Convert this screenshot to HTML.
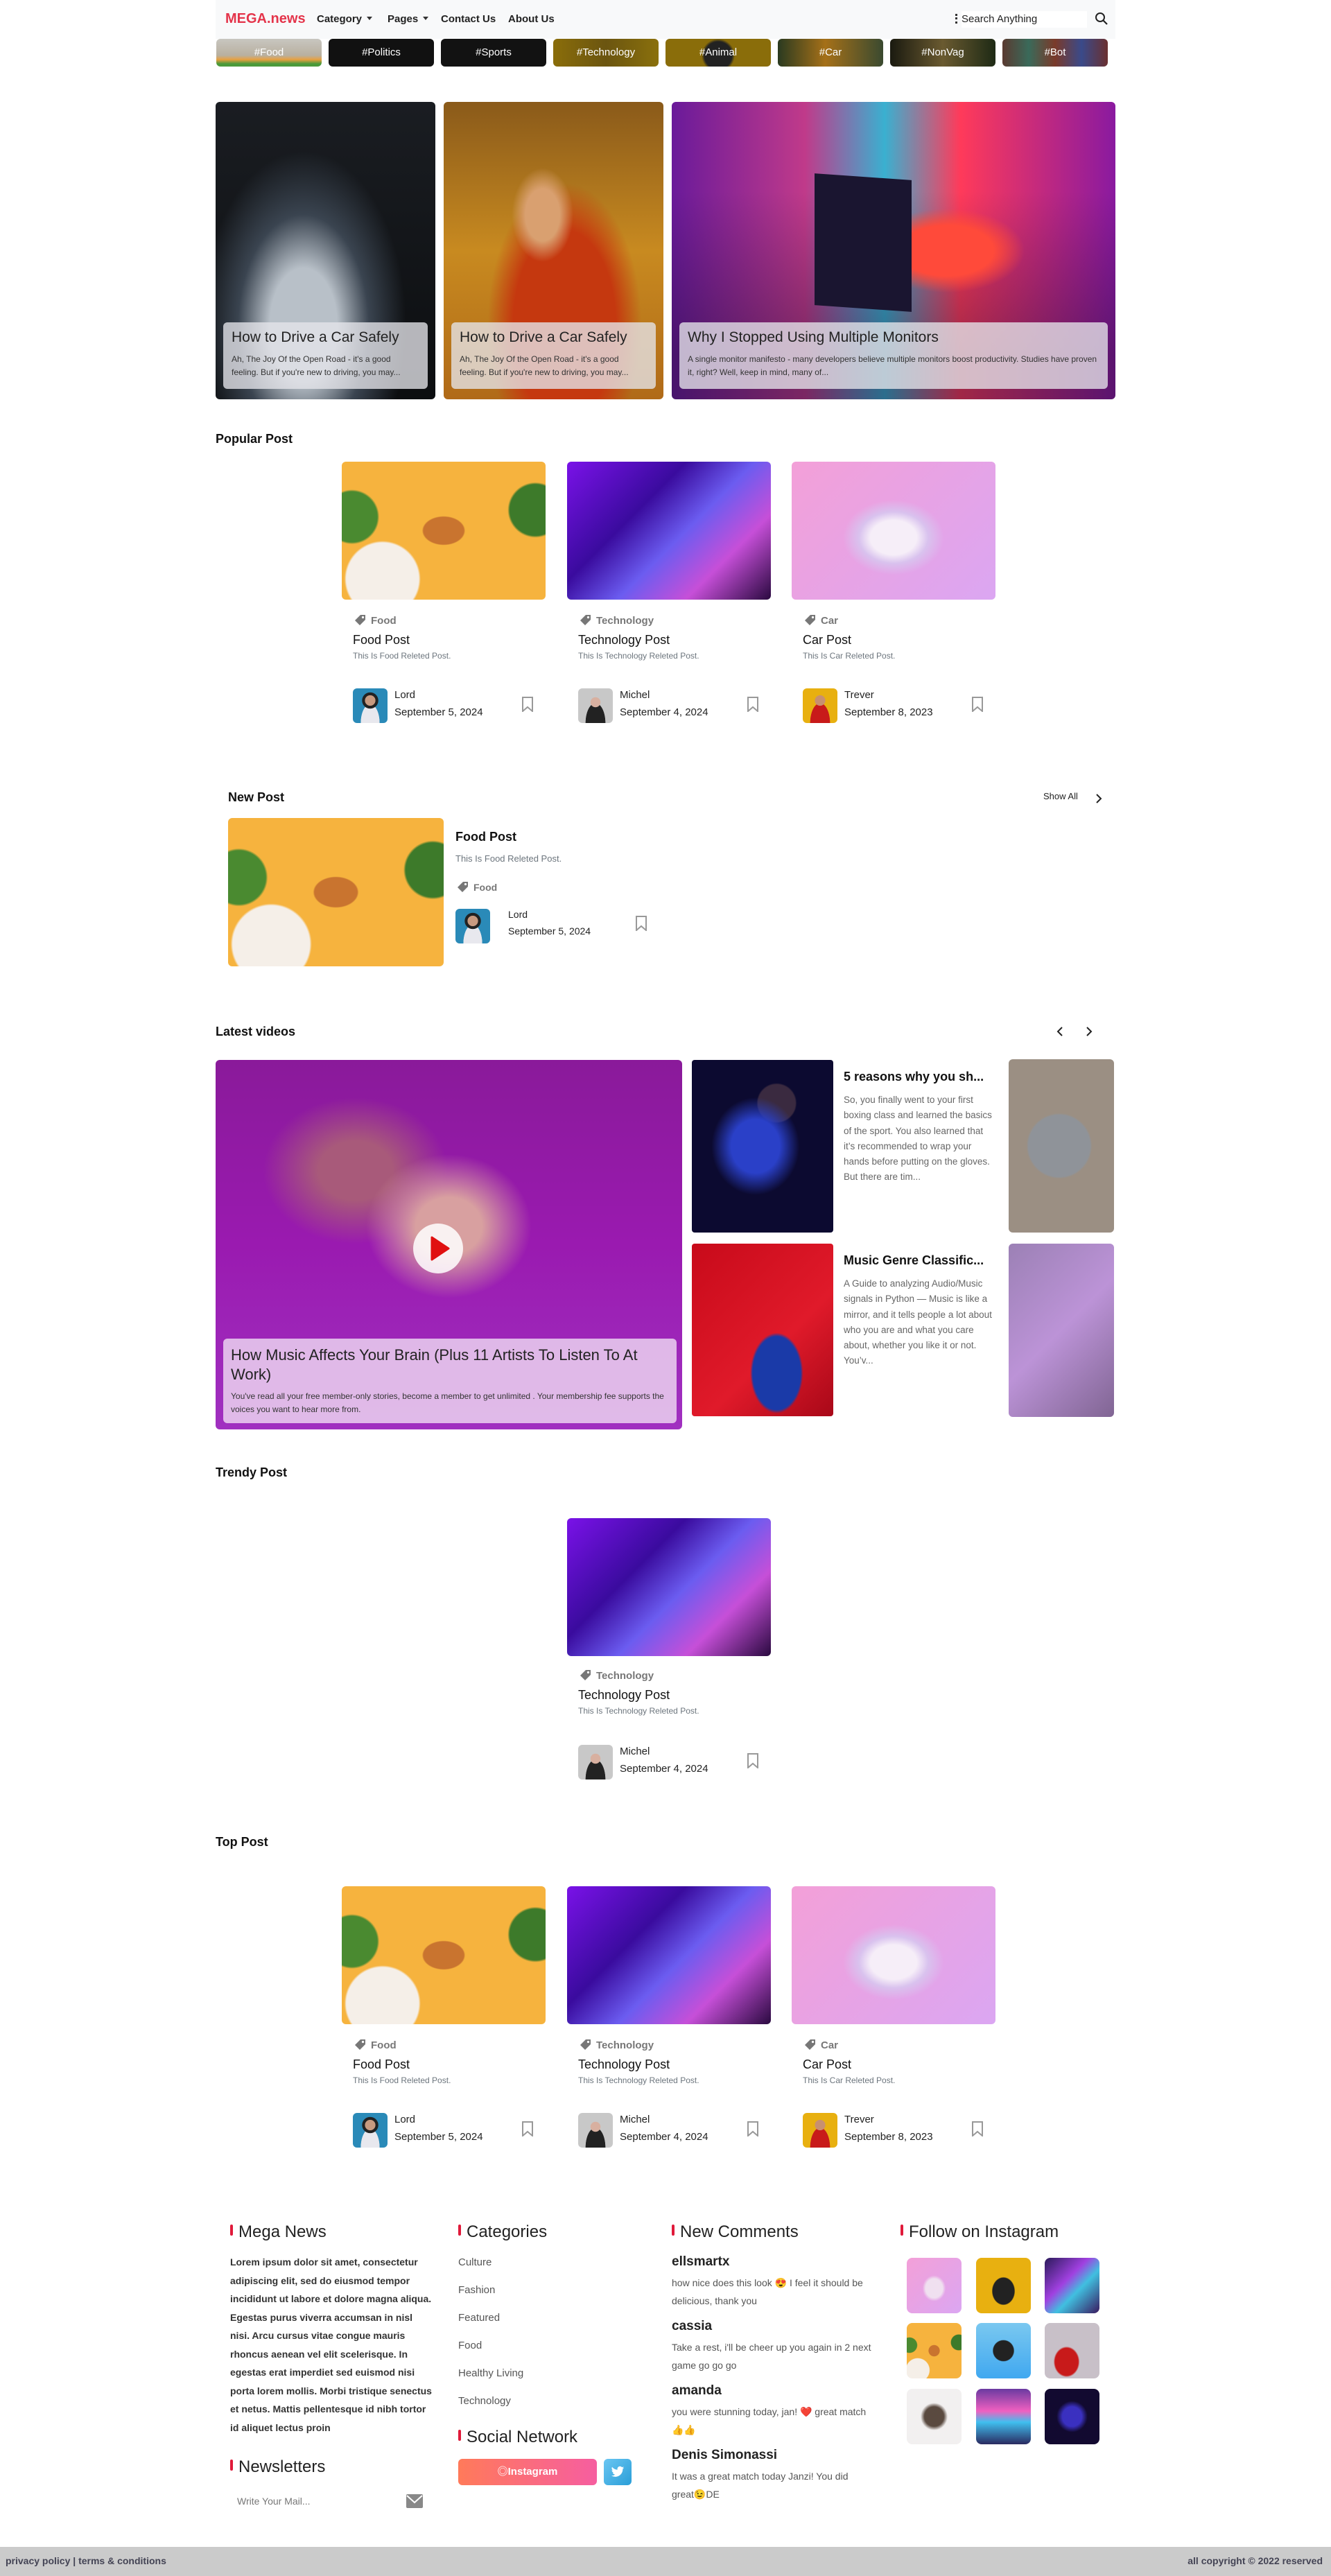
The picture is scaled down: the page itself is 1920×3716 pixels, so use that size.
<!DOCTYPE html>
<html><head><meta charset="utf-8">
<style>
*{margin:0;padding:0;box-sizing:border-box}
body{width:1920px;height:3716px;position:relative;background:#fff;font-family:"Liberation Sans","Noto Sans CJK SC",sans-serif;color:#212529;overflow:hidden}
.a{position:absolute}
.nav{left:311px;top:0;width:1298px;height:56px;background:#f8f9fa}
.logo{left:14px;top:16px;font-size:20px;font-weight:bold;color:#e4344a}
.ni{top:19px;font-size:15px;font-weight:bold;color:#222}
.caret{display:inline-block;width:0;height:0;border-left:4px solid transparent;border-right:4px solid transparent;border-top:5px solid #333;margin-left:7px;vertical-align:3px}
.tile{top:56px;width:152px;height:40px;border-radius:6px;color:#fff;font-size:15px;text-align:center;line-height:40px;overflow:hidden}
.hero{top:147px;height:429px;border-radius:6px;overflow:hidden}
.cap{position:absolute;left:11px;right:11px;top:318px;height:96px;background:rgba(230,230,235,.78);border-radius:6px;padding:10px 12px}
.cap h3{font-size:21px;font-weight:normal;color:#222;margin-bottom:10px;white-space:nowrap}
.cap p{font-size:12px;line-height:19px;color:#333}
.sec{font-size:18px;font-weight:bold;color:#111}
.img{width:294px;height:199px;border-radius:6px}
.tag{font-size:15px;font-weight:bold;color:#777}
.tag svg{vertical-align:-4px;margin-right:6px}
.ct{font-size:18px;color:#111}
.cd{font-size:12px;color:#6c757d}
.av{width:50px;height:50px;border-radius:6px}
.an{font-size:15px;color:#222}
.bm{width:18px;height:22px}
.food{background:radial-gradient(circle at 20% 85%,#f5efe8 0 18%,transparent 19%),radial-gradient(circle at 95% 35%,#3d7a2a 0 12%,transparent 13%),radial-gradient(circle at 5% 40%,#4a8a30 0 12%,transparent 13%),radial-gradient(ellipse at 50% 50%,#c9742f 0 14%,transparent 15%),#f6b33e}
.tech{background:linear-gradient(135deg,#7a12e8 0%,#3a0b9e 35%,#6b5cf0 55%,#c64fd8 75%,#2a0a40 100%)}
.car{background:radial-gradient(ellipse at 50% 55%,#f6eef8 0 16%,#d9c2ee 24%,transparent 35%),linear-gradient(135deg,#f3a0d8,#dba6f2)}
.fh{font-size:24px;color:#222}
.fh:before{content:"";display:inline-block;width:4px;height:16px;background:#e01a3a;border-radius:2px;margin-right:8px;vertical-align:2px}
.fp{font-size:14px;line-height:26.5px;font-weight:bold;color:#333}
.cat{font-size:15px;color:#555}
.cn{font-size:19px;font-weight:bold;color:#222}
.cc{font-size:14px;line-height:26px;color:#555}
.ig{width:79px;height:80px;border-radius:8px}
</style></head><body>

<div class="a nav">
 <div class="a logo">MEGA.news</div>
 <div class="a ni" style="left:146px">Category<span class="caret"></span></div>
 <div class="a ni" style="left:248px">Pages<span class="caret"></span></div>
 <div class="a ni" style="left:325px">Contact Us</div>
 <div class="a ni" style="left:422px">About Us</div>
 <div class="a" style="left:1067px;top:20px;width:3px;height:14px;border-left:3px dotted #333"></div>
 <div class="a" style="left:1076px;top:16px;width:181px;height:24px;background:#fff;font-size:15px;line-height:24px;color:#222">Search Anything</div>
 <svg class="a" style="left:1268px;top:17px" width="20" height="20" viewBox="0 0 20 20"><circle cx="8" cy="8" r="6" fill="none" stroke="#222" stroke-width="2"/><line x1="12.5" y1="12.5" x2="18" y2="18" stroke="#222" stroke-width="2.2"/></svg>
</div>

<div class="a tile" style="left:312px;background:linear-gradient(#c8c6c0,#b8b0a0 60%,#e8a040 75%,#4a9a3a 90%)">#Food</div>
<div class="a tile" style="left:474px;background:#111">#Politics</div>
<div class="a tile" style="left:636px;background:#121212">#Sports</div>
<div class="a tile" style="left:798px;background:linear-gradient(90deg,#8a6d0a,#6b5510 50%,#8a700c)">#Technology</div>
<div class="a tile" style="left:960px;background:radial-gradient(circle at 50% 60%,#222 0 25%,transparent 30%),#8a6d0a">#Animal</div>
<div class="a tile" style="left:1122px;background:linear-gradient(90deg,#2a3a20,#a57018 45%,#3a4a30)">#Car</div>
<div class="a tile" style="left:1284px;background:linear-gradient(90deg,#1a1a10,#6a5a30 50%,#1e2a15)">#NonVag</div>
<div class="a tile" style="left:1446px;background:linear-gradient(90deg,#5a3a30,#3a6a5a,#7a3a2a,#3a4a8a,#6a3030)">#Bot</div>

<div class="a hero" style="left:311px;width:317px;background:radial-gradient(ellipse at 40% 75%,#b8c0c8 0 18%,#3a4450 35%,transparent 55%),linear-gradient(#1a1d22,#0c0e10)">
 <div class="cap"><h3>How to Drive a Car Safely</h3><p>Ah, The Joy Of the Open Road - it's a good feeling. But if you're new to driving, you may...</p></div></div>
<div class="a hero" style="left:640px;width:317px;background:radial-gradient(ellipse at 45% 38%,#d9a070 0 10%,transparent 18%),radial-gradient(ellipse at 55% 75%,#c5380f 0 30%,transparent 45%),linear-gradient(#8a5a1a,#c88a20 50%,#b06a18)">
 <div class="cap"><h3>How to Drive a Car Safely</h3><p>Ah, The Joy Of the Open Road - it's a good feeling. But if you're new to driving, you may...</p></div></div>
<div class="a hero" style="left:969px;width:640px;background:radial-gradient(ellipse at 62% 50%,#ff4a3a 0 12%,transparent 20%),linear-gradient(180deg,transparent 30%,rgba(20,10,40,.4) 85%),linear-gradient(90deg,#6a1a9a 0%,#c03a8a 30%,#3ab0d0 48%,#ff3a5a 65%,#8a1aa0 100%)">
 <div class="a" style="left:206px;top:108px;width:140px;height:190px;background:#1a1530;transform:skewY(4deg)"></div>
 <div class="cap"><h3>Why I Stopped Using Multiple Monitors</h3><p>A single monitor manifesto - many developers believe multiple monitors boost productivity. Studies have proven it, right? Well, keep in mind, many of...</p></div></div>

<div class="a sec" style="left:311px;top:623px">Popular Post</div>
<div class="a img food" style="left:493px;top:666px"></div>
<div class="a img tech" style="left:818px;top:666px"></div>
<div class="a img car" style="left:1142px;top:666px"></div>

<div class="a" style="left:509px;top:884px;width:280px">
 <div class="tag"><svg width="20" height="20" viewBox="0 0 20 20"><path d="M3 11 L11 3 L18 3 L18 10 L10 18 Z" fill="#777"/><circle cx="14.5" cy="6.5" r="1.6" fill="#fff"/></svg>Food</div>
 <div class="ct" style="margin-top:9px">Food Post</div>
 <div class="cd" style="margin-top:5px">This Is Food Releted Post.</div>
</div>
<div class="a" style="left:834px;top:884px;width:280px">
 <div class="tag"><svg width="20" height="20" viewBox="0 0 20 20"><path d="M3 11 L11 3 L18 3 L18 10 L10 18 Z" fill="#777"/><circle cx="14.5" cy="6.5" r="1.6" fill="#fff"/></svg>Technology</div>
 <div class="ct" style="margin-top:9px">Technology Post</div>
 <div class="cd" style="margin-top:5px">This Is Technology Releted Post.</div>
</div>
<div class="a" style="left:1158px;top:884px;width:280px">
 <div class="tag"><svg width="20" height="20" viewBox="0 0 20 20"><path d="M3 11 L11 3 L18 3 L18 10 L10 18 Z" fill="#777"/><circle cx="14.5" cy="6.5" r="1.6" fill="#fff"/></svg>Car</div>
 <div class="ct" style="margin-top:9px">Car Post</div>
 <div class="cd" style="margin-top:5px">This Is Car Releted Post.</div>
</div>

<div class="a av" style="left:509px;top:993px;background:radial-gradient(circle at 50% 35%,#c89a80 0 18%,#222 19% 28%,transparent 29%),radial-gradient(ellipse at 50% 100%,#e8e8ee 0 38%,transparent 39%),#2a8ab8"></div>
<div class="a an" style="left:569px;top:994px">Lord</div><div class="a an" style="left:569px;top:1019px">September 5, 2024</div>
<svg class="a bm" style="left:752px;top:1005px" viewBox="0 0 18 22"><path d="M2 1 H16 V21 L9 15 L2 21 Z" fill="none" stroke="#999" stroke-width="2"/></svg>

<div class="a av" style="left:834px;top:993px;background:radial-gradient(circle at 50% 40%,#d8b0a0 0 18%,transparent 19%),radial-gradient(ellipse at 50% 100%,#222 0 40%,transparent 41%),#c8c8c8"></div>
<div class="a an" style="left:894px;top:994px">Michel</div><div class="a an" style="left:894px;top:1019px">September 4, 2024</div>
<svg class="a bm" style="left:1077px;top:1005px" viewBox="0 0 18 22"><path d="M2 1 H16 V21 L9 15 L2 21 Z" fill="none" stroke="#999" stroke-width="2"/></svg>

<div class="a av" style="left:1158px;top:993px;background:radial-gradient(circle at 50% 35%,#c89070 0 18%,transparent 19%),radial-gradient(ellipse at 50% 100%,#c81a1a 0 40%,transparent 41%),#e8b010"></div>
<div class="a an" style="left:1218px;top:994px">Trever</div><div class="a an" style="left:1218px;top:1019px">September 8, 2023</div>
<svg class="a bm" style="left:1401px;top:1005px" viewBox="0 0 18 22"><path d="M2 1 H16 V21 L9 15 L2 21 Z" fill="none" stroke="#999" stroke-width="2"/></svg>

<div class="a sec" style="left:329px;top:1140px">New Post</div>
<div class="a" style="left:1505px;top:1141px;font-size:13px;color:#222">Show All</div>
<svg class="a" style="left:1580px;top:1144px" width="10" height="16" viewBox="0 0 10 16"><path d="M2 2 L8 8 L2 14" fill="none" stroke="#222" stroke-width="2"/></svg>
<div class="a food" style="left:329px;top:1180px;width:311px;height:214px;border-radius:6px"></div>
<div class="a" style="left:657px;top:1197px;font-size:18px;font-weight:bold;color:#111">Food Post</div>
<div class="a cd" style="left:657px;top:1231px;font-size:13px">This Is Food Releted Post.</div>
<div class="a tag" style="left:657px;top:1269px;font-size:14px"><svg width="20" height="20" viewBox="0 0 20 20"><path d="M3 11 L11 3 L18 3 L18 10 L10 18 Z" fill="#777"/><circle cx="14.5" cy="6.5" r="1.6" fill="#fff"/></svg>Food</div>
<div class="a av" style="left:657px;top:1311px;background:radial-gradient(circle at 50% 35%,#c89a80 0 18%,#222 19% 28%,transparent 29%),radial-gradient(ellipse at 50% 100%,#e8e8ee 0 38%,transparent 39%),#2a8ab8"></div>
<div class="a an" style="left:733px;top:1311px;font-size:14px">Lord</div><div class="a an" style="left:733px;top:1335px;font-size:14px">September 5, 2024</div>
<svg class="a bm" style="left:916px;top:1321px" viewBox="0 0 18 22"><path d="M2 1 H16 V21 L9 15 L2 21 Z" fill="none" stroke="#999" stroke-width="2"/></svg>

<div class="a sec" style="left:311px;top:1478px">Latest videos</div>
<svg class="a" style="left:1524px;top:1480px" width="10" height="16" viewBox="0 0 10 16"><path d="M8 2 L2 8 L8 14" fill="none" stroke="#222" stroke-width="2"/></svg>
<svg class="a" style="left:1566px;top:1480px" width="10" height="16" viewBox="0 0 10 16"><path d="M2 2 L8 8 L2 14" fill="none" stroke="#222" stroke-width="2"/></svg>

<div class="a" style="left:311px;top:1529px;width:673px;height:533px;border-radius:6px;overflow:hidden;background:radial-gradient(ellipse at 50% 45%,#d8a0a0 0 10%,transparent 25%),radial-gradient(ellipse at 30% 30%,#a85a7a 0 8%,transparent 20%),linear-gradient(#8a1a9a,#9a1ab0 50%,#a030c0)">
 <div class="a" style="left:285px;top:236px;width:72px;height:72px;border-radius:50%;background:rgba(255,255,255,.85)"></div>
 <svg class="a" style="left:310px;top:254px" width="28" height="36" viewBox="0 0 28 36"><path d="M2 2 L26 18 L2 34 Z" fill="#e01010" stroke="#e01010" stroke-width="3" stroke-linejoin="round"/></svg>
 <div class="a" style="left:11px;top:402px;width:654px;height:122px;background:rgba(235,210,240,.85);border-radius:6px;padding:10px 11px">
  <div style="font-size:22px;line-height:28px;color:#222">How Music Affects Your Brain (Plus 11 Artists To Listen To At Work)</div>
  <div style="font-size:12px;line-height:19px;color:#333;margin-top:8px">You've read all your free member-only stories, become a member to get unlimited . Your membership fee supports the voices you want to hear more from.</div>
 </div>
</div>

<div class="a" style="left:998px;top:1529px;width:204px;height:249px;border-radius:4px;background:radial-gradient(ellipse at 45% 50%,#2a40c8 0 22%,transparent 40%),radial-gradient(circle at 60% 25%,#3a2a40 0 12%,transparent 13%),#0c0a30"></div>
<div class="a" style="left:1217px;top:1543px;font-size:18px;font-weight:bold;color:#111">5 reasons why you sh...</div>
<div class="a" style="left:1217px;top:1576px;width:215px;font-size:13.5px;line-height:22.3px;color:#666">So, you finally went to your first boxing class and learned the basics of the sport. You also learned that it’s recommended to wrap your hands before putting on the gloves. But there are tim...</div>
<div class="a" style="left:1455px;top:1528px;width:152px;height:250px;border-radius:6px;background:radial-gradient(circle at 48% 50%,#6a7078 0 30%,transparent 32%),#7a6a5a;opacity:.75"></div>

<div class="a" style="left:998px;top:1794px;width:204px;height:249px;border-radius:4px;background:radial-gradient(ellipse at 60% 75%,#1a3aa8 0 20%,transparent 22%),linear-gradient(135deg,#c80a1a,#e01a2a 60%,#a80818)"></div>
<div class="a" style="left:1217px;top:1808px;font-size:18px;font-weight:bold;color:#111">Music Genre Classific...</div>
<div class="a" style="left:1217px;top:1841px;width:215px;font-size:13.5px;line-height:22.3px;color:#666">A Guide to analyzing Audio/Music signals in Python — Music is like a mirror, and it tells people a lot about who you are and what you care about, whether you like it or not. You’v...</div>
<div class="a" style="left:1455px;top:1794px;width:152px;height:250px;border-radius:6px;background:linear-gradient(135deg,#8a6aa8,#b080d0 50%,#6a4a80);opacity:.85"></div>

<div class="a sec" style="left:311px;top:2114px">Trendy Post</div>
<div class="a img tech" style="left:818px;top:2190px"></div>
<div class="a" style="left:834px;top:2406px;width:280px">
 <div class="tag"><svg width="20" height="20" viewBox="0 0 20 20"><path d="M3 11 L11 3 L18 3 L18 10 L10 18 Z" fill="#777"/><circle cx="14.5" cy="6.5" r="1.6" fill="#fff"/></svg>Technology</div>
 <div class="ct" style="margin-top:9px">Technology Post</div>
 <div class="cd" style="margin-top:5px">This Is Technology Releted Post.</div>
</div>
<div class="a av" style="left:834px;top:2517px;background:radial-gradient(circle at 50% 40%,#d8b0a0 0 18%,transparent 19%),radial-gradient(ellipse at 50% 100%,#222 0 40%,transparent 41%),#c8c8c8"></div>
<div class="a an" style="left:894px;top:2518px">Michel</div><div class="a an" style="left:894px;top:2543px">September 4, 2024</div>
<svg class="a bm" style="left:1077px;top:2529px" viewBox="0 0 18 22"><path d="M2 1 H16 V21 L9 15 L2 21 Z" fill="none" stroke="#999" stroke-width="2"/></svg>

<div class="a sec" style="left:311px;top:2647px">Top Post</div>
<div class="a img food" style="left:493px;top:2721px"></div>
<div class="a img tech" style="left:818px;top:2721px"></div>
<div class="a img car" style="left:1142px;top:2721px"></div>
<div class="a" style="left:509px;top:2939px;width:280px">
 <div class="tag"><svg width="20" height="20" viewBox="0 0 20 20"><path d="M3 11 L11 3 L18 3 L18 10 L10 18 Z" fill="#777"/><circle cx="14.5" cy="6.5" r="1.6" fill="#fff"/></svg>Food</div>
 <div class="ct" style="margin-top:9px">Food Post</div>
 <div class="cd" style="margin-top:5px">This Is Food Releted Post.</div>
</div>
<div class="a" style="left:834px;top:2939px;width:280px">
 <div class="tag"><svg width="20" height="20" viewBox="0 0 20 20"><path d="M3 11 L11 3 L18 3 L18 10 L10 18 Z" fill="#777"/><circle cx="14.5" cy="6.5" r="1.6" fill="#fff"/></svg>Technology</div>
 <div class="ct" style="margin-top:9px">Technology Post</div>
 <div class="cd" style="margin-top:5px">This Is Technology Releted Post.</div>
</div>
<div class="a" style="left:1158px;top:2939px;width:280px">
 <div class="tag"><svg width="20" height="20" viewBox="0 0 20 20"><path d="M3 11 L11 3 L18 3 L18 10 L10 18 Z" fill="#777"/><circle cx="14.5" cy="6.5" r="1.6" fill="#fff"/></svg>Car</div>
 <div class="ct" style="margin-top:9px">Car Post</div>
 <div class="cd" style="margin-top:5px">This Is Car Releted Post.</div>
</div>
<div class="a av" style="left:509px;top:3048px;background:radial-gradient(circle at 50% 35%,#c89a80 0 18%,#222 19% 28%,transparent 29%),radial-gradient(ellipse at 50% 100%,#e8e8ee 0 38%,transparent 39%),#2a8ab8"></div>
<div class="a an" style="left:569px;top:3049px">Lord</div><div class="a an" style="left:569px;top:3074px">September 5, 2024</div>
<svg class="a bm" style="left:752px;top:3060px" viewBox="0 0 18 22"><path d="M2 1 H16 V21 L9 15 L2 21 Z" fill="none" stroke="#999" stroke-width="2"/></svg>
<div class="a av" style="left:834px;top:3048px;background:radial-gradient(circle at 50% 40%,#d8b0a0 0 18%,transparent 19%),radial-gradient(ellipse at 50% 100%,#222 0 40%,transparent 41%),#c8c8c8"></div>
<div class="a an" style="left:894px;top:3049px">Michel</div><div class="a an" style="left:894px;top:3074px">September 4, 2024</div>
<svg class="a bm" style="left:1077px;top:3060px" viewBox="0 0 18 22"><path d="M2 1 H16 V21 L9 15 L2 21 Z" fill="none" stroke="#999" stroke-width="2"/></svg>
<div class="a av" style="left:1158px;top:3048px;background:radial-gradient(circle at 50% 35%,#c89070 0 18%,transparent 19%),radial-gradient(ellipse at 50% 100%,#c81a1a 0 40%,transparent 41%),#e8b010"></div>
<div class="a an" style="left:1218px;top:3049px">Trever</div><div class="a an" style="left:1218px;top:3074px">September 8, 2023</div>
<svg class="a bm" style="left:1401px;top:3060px" viewBox="0 0 18 22"><path d="M2 1 H16 V21 L9 15 L2 21 Z" fill="none" stroke="#999" stroke-width="2"/></svg>

<div class="a fh" style="left:332px;top:3206px">Mega News</div>
<div class="a fp" style="left:332px;top:3250px;width:292px">Lorem ipsum dolor sit amet, consectetur adipiscing elit, sed do eiusmod tempor incididunt ut labore et dolore magna aliqua. Egestas purus viverra accumsan in nisl nisi. Arcu cursus vitae congue mauris rhoncus aenean vel elit scelerisque. In egestas erat imperdiet sed euismod nisi porta lorem mollis. Morbi tristique senectus et netus. Mattis pellentesque id nibh tortor id aliquet lectus proin</div>
<div class="a fh" style="left:332px;top:3545px">Newsletters</div>
<div class="a" style="left:342px;top:3600px;font-size:14px;color:#777">Write Your Mail...</div>
<svg class="a" style="left:586px;top:3598px" width="24" height="20" viewBox="0 0 24 20"><rect x="0" y="0" width="24" height="20" rx="2" fill="#888"/><path d="M1 2 L12 12 L23 2" fill="none" stroke="#fff" stroke-width="2"/></svg>

<div class="a fh" style="left:661px;top:3206px">Categories</div>
<div class="a cat" style="left:661px;top:3255px">Culture</div>
<div class="a cat" style="left:661px;top:3295px">Fashion</div>
<div class="a cat" style="left:661px;top:3335px">Featured</div>
<div class="a cat" style="left:661px;top:3375px">Food</div>
<div class="a cat" style="left:661px;top:3415px">Healthy Living</div>
<div class="a cat" style="left:661px;top:3455px">Technology</div>
<div class="a fh" style="left:661px;top:3502px">Social Network</div>
<div class="a" style="left:661px;top:3547px;width:200px;height:38px;border-radius:6px;background:linear-gradient(90deg,#ff7a5a,#f65ea0);color:#fff;font-size:15px;font-weight:bold;text-align:center;line-height:38px">◎Instagram</div>
<div class="a" style="left:871px;top:3547px;width:40px;height:38px;border-radius:6px;background:linear-gradient(135deg,#6ac6f2,#2a9ed8)"><svg style="margin:10px" width="20" height="18" viewBox="0 0 24 20"><path d="M23 2.5c-.8.4-1.7.6-2.6.7.9-.6 1.6-1.4 2-2.5-.9.5-1.9.9-2.9 1.1A4.5 4.5 0 0 0 11.7 6 12.8 12.8 0 0 1 2.4 1.3a4.5 4.5 0 0 0 1.4 6c-.7 0-1.400-.2-2-.6 0 2.2 1.5 4 3.6 4.4-.7.2-1.4.2-2 .1.6 1.8 2.2 3.1 4.2 3.1A9 9 0 0 1 1 16.2 12.8 12.8 0 0 0 8 18.2c8.3 0 12.8-6.9 12.8-12.8v-.6c.9-.6 1.6-1.4 2.2-2.3z" fill="#fff"/></svg></div>

<div class="a fh" style="left:969px;top:3206px">New Comments</div>
<div class="a cn" style="left:969px;top:3252px">ellsmartx</div>
<div class="a cc" style="left:969px;top:3280px;width:290px">how nice does this look 😍 I feel it should be delicious, thank you</div>
<div class="a cn" style="left:969px;top:3345px">cassia</div>
<div class="a cc" style="left:969px;top:3373px;width:290px">Take a rest, i'll be cheer up you again in 2 next game go go go</div>
<div class="a cn" style="left:969px;top:3438px">amanda</div>
<div class="a cc" style="left:969px;top:3466px;width:290px">you were stunning today, jan! ❤️ great match 👍👍</div>
<div class="a cn" style="left:969px;top:3531px">Denis Simonassi</div>
<div class="a cc" style="left:969px;top:3559px;width:290px">It was a great match today Janzi! You did great😉DE</div>

<div class="a fh" style="left:1299px;top:3206px">Follow on Instagram</div>
<div class="a ig" style="left:1308px;top:3257px;background:radial-gradient(ellipse at 50% 55%,#f0e0f0 0 22%,transparent 30%),linear-gradient(135deg,#f3a0d8,#dba6f2)"></div>
<div class="a ig" style="left:1408px;top:3257px;background:radial-gradient(ellipse at 50% 60%,#222 0 28%,transparent 30%),#e8b010"></div>
<div class="a ig" style="left:1507px;top:3257px;background:linear-gradient(135deg,#2a1a5a,#a040e0 40%,#40c0e0 60%,#3a1a60)"></div>
<div class="a ig food" style="left:1308px;top:3351px"></div>
<div class="a ig" style="left:1408px;top:3351px;background:radial-gradient(circle at 50% 50%,#222 0 26%,transparent 28%),linear-gradient(#7ac8f0,#40a8f0)"></div>
<div class="a ig" style="left:1507px;top:3351px;background:radial-gradient(ellipse at 40% 70%,#c81a1a 0 25%,transparent 28%),#c8c0c8"></div>
<div class="a ig" style="left:1308px;top:3446px;background:radial-gradient(ellipse at 50% 50%,#5a4a40 0 25%,transparent 35%),#f2f0f0"></div>
<div class="a ig" style="left:1408px;top:3446px;background:linear-gradient(#6a3aa0,#f060c0 40%,#40c0f0 60%,#2a2a60)"></div>
<div class="a ig" style="left:1507px;top:3446px;background:radial-gradient(ellipse at 50% 50%,#3a30c0 0 25%,transparent 40%),#120a30"></div>

<div class="a" style="left:0;top:3674px;width:1920px;height:42px;background:#cbcbcb"></div>
<div class="a" style="left:8px;top:3686px;font-size:14px;font-weight:bold;color:#445">privacy policy | terms &amp; conditions</div>
<div class="a" style="right:12px;top:3686px;font-size:14px;font-weight:bold;color:#445">all copyright © 2022 reserved</div>

</body></html>
